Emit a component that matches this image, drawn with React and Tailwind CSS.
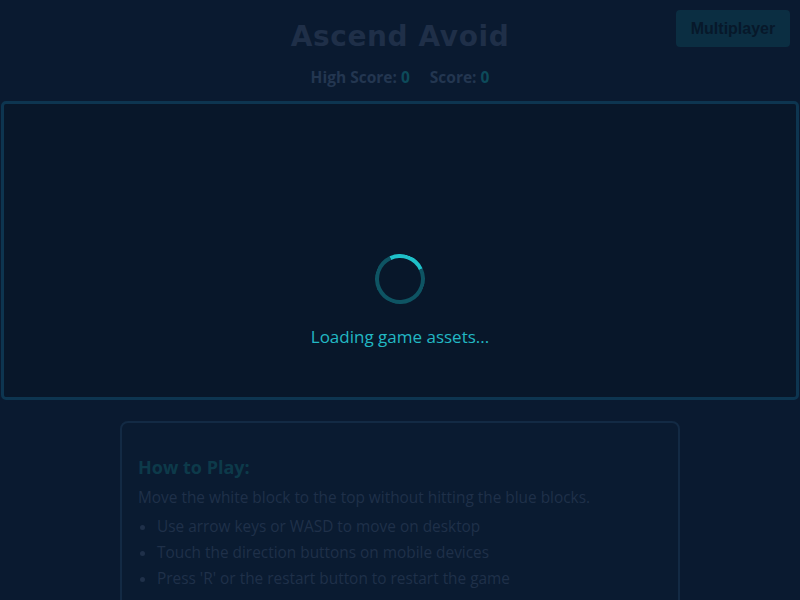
export default function App() {
  return (
    <div className="relative min-h-screen overflow-hidden bg-[#0a1a30] font-['Open_Sans',sans-serif]">
      <button className="absolute right-[10px] top-[10px] h-[37px] w-[114px] rounded-[4px] bg-[#0b2e42] font-['Liberation_Sans',sans-serif] text-[16px] font-bold text-[#07182a]">
        Multiplayer
      </button>

      {/* header */}
      <div className="flex flex-col items-center pt-[18px]">
        <h1 className="font-['DejaVu_Sans',sans-serif] text-[28px] font-bold leading-[38px] tracking-[0.6px] text-[#1f2f48]">
          Ascend Avoid
        </h1>
        <div className="mt-[11px] flex gap-[20px] text-[15.5px] font-bold leading-[20px] text-[#233650]">
          <span>
            High Score: <span className="text-[#0d4a5a]">0</span>
          </span>
          <span>
            Score: <span className="text-[#0d4a5a]">0</span>
          </span>
        </div>
      </div>

      {/* game canvas */}
      <div className="mx-px mt-[14px] flex h-[299px] flex-col items-center rounded-[5px] border-[3px] border-[#0d3550] bg-[#08172a] pt-[150px]">
        <div className="h-[50px] w-[50px] rotate-[20deg] rounded-full border-[4px] border-[#0e5463] border-t-[#1fc0c9]" />
        <div className="mt-[21px] text-[17px] leading-[24px] text-[#22b8c4]">Loading game assets...</div>
      </div>

      {/* instructions */}
      <div className="mx-auto mt-[21px] w-[560px] rounded-[8px] border-2 border-[#132a44] bg-[#0a1b31] px-[16px] pb-[16px] pt-[31px]">
        <h2 className="text-[18px] font-bold leading-[26px] text-[#0d3a4a]">How to Play:</h2>
        <p className="mt-[7px] text-[15.4px] leading-[22px] text-[#1f3049]">
          Move the white block to the top without hitting the blue blocks.
        </p>
        <ul className="mt-[5px] list-disc pl-[19px] text-[15.4px] leading-[26px] text-[#1f3049] marker:text-[#1f3049]">
          <li>Use arrow keys or WASD to move on desktop</li>
          <li>Touch the direction buttons on mobile devices</li>
          <li>Press 'R' or the restart button to restart the game</li>
        </ul>
      </div>
    </div>
  );
}
